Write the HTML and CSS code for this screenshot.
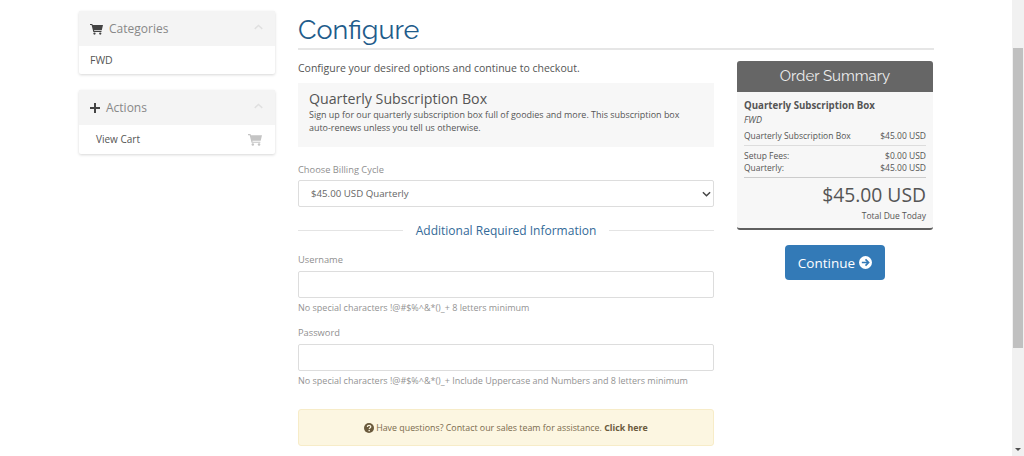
FILE: index.html
```html
<!DOCTYPE html>
<html lang="en">
<head>
  <meta charset="UTF-8">
  <title>Configure</title>
  <link rel="stylesheet" href="styles.css">
</head>
<body>
<div class="viewport">
  <div class="page">

    <!-- SIDEBAR -->
    <aside class="sidebar">
      <div class="panel">
        <div class="panel-head">
          <span class="panel-title">
            <svg class="icon-cart" viewBox="0 0 18 16"><path d="M0 1h3.2l.5 1.6H18l-1.7 7H5.6l.3 1.2h10v1.5H4.6L2.2 2.5H0z"/><circle cx="6.2" cy="14.3" r="1.6"/><circle cx="14.2" cy="14.3" r="1.6"/></svg>
            Categories
          </span>
          <svg class="chevron" viewBox="0 0 12 7"><path d="M1 6l5-4.5L11 6"/></svg>
        </div>
        <div class="panel-item">FWD</div>
      </div>
      <div class="panel">
        <div class="panel-head">
          <span class="panel-title">
            <svg class="icon-plus" viewBox="0 0 10 10"><path d="M4 0h2v4h4v2H6v4H4V6H0V4h4z"/></svg>
            Actions
          </span>
          <svg class="chevron" viewBox="0 0 12 7"><path d="M1 6l5-4.5L11 6"/></svg>
        </div>
        <div class="panel-item panel-link">
          View Cart
          <svg class="icon-cart-light" viewBox="0 0 18 16"><path d="M0 1h3.2l.5 1.6H18l-1.7 7H5.6l.3 1.2h10v1.5H4.6L2.2 2.5H0z"/><circle cx="6.2" cy="14.3" r="1.6"/><circle cx="14.2" cy="14.3" r="1.6"/></svg>
        </div>
      </div>
    </aside>

    <!-- MAIN -->
    <main class="main">
      <h1 class="page-title">Configure</h1>

      <div class="columns">
        <div class="config">
          <p class="intro">Configure your desired options and continue to checkout.</p>

          <div class="product-box">
            <div class="product-name">Quarterly Subscription Box</div>
            <p class="product-desc">Sign up for our quarterly subscription box full of goodies and more. This subscription box auto-renews unless you tell us otherwise.</p>
          </div>

          <div class="field field-billing">
            <label class="field-label">Choose Billing Cycle</label>
            <div class="select-box">
              $45.00 USD Quarterly
              <svg class="select-arrow" viewBox="0 0 10 6"><path d="M1 1l4 4 4-4"/></svg>
            </div>
          </div>

          <div class="sub-heading"><span>Additional Required Information</span></div>

          <div class="field field-user">
            <label class="field-label">Username</label>
            <div class="text-input"></div>
            <div class="help">No special characters !@#$%^&amp;*()_+ 8 letters minimum</div>
          </div>

          <div class="field field-pass">
            <label class="field-label">Password</label>
            <div class="text-input"></div>
            <div class="help">No special characters !@#$%^&amp;*()_+ Include Uppercase and Numbers and 8 letters minimum</div>
          </div>

          <div class="notice">
            <svg class="icon-question" viewBox="0 0 16 16"><circle cx="8" cy="8" r="8"/><path class="q-mark" d="M5.4 6.2c0-3.3 5.4-3.3 5.4-.2 0 2-2.4 2-2.4 3.6"/><rect class="q-dot" x="7.2" y="11" width="2.2" height="2.2"/></svg>
            <span>Have questions? Contact our sales team for assistance. <strong>Click here</strong></span>
          </div>
        </div>

        <!-- ORDER SUMMARY -->
        <div class="summary-col">
          <div class="summary">
            <div class="summary-head">Order Summary</div>
            <div class="summary-body">
              <div class="summary-name">Quarterly Subscription Box</div>
              <div class="summary-group">FWD</div>
              <div class="summary-row summary-row-first"><span>Quarterly Subscription Box</span><span>$45.00 USD</span></div>
              <div class="summary-fees">
                <div class="summary-row"><span>Setup Fees:</span><span>$0.00 USD</span></div>
                <div class="summary-row"><span>Quarterly:</span><span>$45.00 USD</span></div>
              </div>
              <div class="summary-total">$45.00 USD</div>
              <div class="summary-due">Total Due Today</div>
            </div>
          </div>
          <div class="btn-continue">
            Continue
            <svg class="icon-arrow" viewBox="0 0 16 16"><circle cx="8" cy="8" r="8"/><path class="arrow-mark" d="M3.5 8h8M8 4.2L11.8 8 8 11.8"/></svg>
          </div>
        </div>
      </div>
    </main>

    <!-- SCROLLBAR (headless browser hides the native one) -->
    <div class="scrollbar">
      <div class="scroll-thumb"></div>
      <div class="scroll-down"></div>
    </div>
  </div>
</div>
</body>
</html>
```

FILE: styles.css
```css
/* --- Global --- */
html, body { margin: 0; padding: 0; height: 100%; overflow: hidden; }
body { font-family: 'Open Sans', sans-serif; font-size: 10px; color: #555; background: #fff; }
.viewport { height: 456px; overflow: hidden; }
.page { display: flex; align-items: flex-start; height: 456px; padding: 11px 0 0 79px; box-sizing: border-box; gap: 23px; }

/* --- Scrollbar --- */
.scrollbar { width: 12px; height: 456px; margin: -11px 0 0 55px; flex: none; background: #f1f1f1; display: flex; flex-direction: column; align-items: center; }
.scroll-thumb { width: 10px; height: 300px; margin-top: 48px; background: #c0c0c0; }
.scroll-down { margin-top: auto; margin-bottom: 5px; border: 3px solid transparent; border-top: 3px solid #505050; border-bottom: 0; }

/* --- Sidebar --- */
.sidebar { width: 196px; flex: none; display: flex; flex-direction: column; gap: 16px; }
.panel { background: #fff; border-radius: 2px; box-shadow: 0 1px 3px rgba(0,0,0,0.16); }
.panel-head { height: 35px; background: #f4f4f4; display: flex; align-items: center; justify-content: space-between; padding: 0 12px 0 11px; }
.panel-title { font-size: 12px; color: #888; display: flex; align-items: center; gap: 6px; }
.panel-item { height: 28px; display: flex; align-items: center; padding: 0 11px; font-size: 10.5px; color: #555; }
.panel-link { height: 29px; box-sizing: border-box; justify-content: space-between; padding: 0 13px 1px 17px; font-size: 10px; }
.icon-cart { width: 13px; height: 12px; fill: #444; }
.icon-plus { width: 10px; height: 10px; fill: #444; }
.icon-cart-light { width: 14px; height: 13px; fill: #c4c4c4; }
.chevron { width: 9px; height: 6px; fill: none; stroke: #e0e0e0; stroke-width: 2; margin-top: -3px; }

/* --- Main --- */
.main { width: 636px; flex: none; }
.page-title { margin: 0; height: 39px; box-sizing: border-box; font-family: 'Raleway', 'Inter', sans-serif; font-weight: 400; font-size: 27px; line-height: 37px; color: #1f5c8b; border-bottom: 2px solid #e6e6e6; }
.intro { margin: 0; font-size: 10.5px; line-height: 14px; color: #555; }
.columns { display: flex; align-items: flex-start; gap: 23px; }
.config { width: 416px; flex: none; margin-top: 11px; }

.product-box { height: 64px; margin-top: 8px; box-sizing: border-box; background: #f7f7f7; padding: 7px 11px 0; }
.product-name { font-size: 14.2px; line-height: 17px; color: #555; }
.product-desc { margin: 1px 0 0; font-size: 8.93px; line-height: 13px; color: #555; }

.field-label { display: block; font-size: 9.3px; line-height: 14px; color: #8f8f8f; }
.field-billing { margin-top: 16px; }
.select-box { height: 27px; box-sizing: border-box; margin-top: 3px; border: 1px solid #ddd; border-radius: 2px; display: flex; align-items: center; justify-content: space-between; padding: 0 2px 0 12px; font-size: 9.7px; color: #666; }
.select-arrow { width: 9px; height: 6px; fill: none; stroke: #444; stroke-width: 1.6; }

.sub-heading { display: flex; align-items: center; gap: 13px; margin-top: 14px; font-size: 12px; line-height: 19px; color: #336a98; }
.sub-heading::before, .sub-heading::after { content: ""; flex: 1; height: 1px; background: #e4e4e4; }

.field-user { margin-top: 13px; }
.field-pass { margin-top: 11px; }
.text-input { height: 27px; box-sizing: border-box; margin-top: 4px; border: 1px solid #ddd; border-radius: 2px; }
.help { margin-top: 3px; font-size: 9px; line-height: 14px; color: #939393; }

.notice { height: 37px; box-sizing: border-box; margin-top: 21px; background: #fcf6e1; border: 1px solid #f7ecc8; border-radius: 3px; display: flex; align-items: center; justify-content: center; gap: 2px; font-size: 8.85px; color: #7a6a4c; }
.notice strong { color: #6a5a3c; }
.icon-question { width: 10px; height: 10px; fill: #6a5a3c; }
.q-mark { fill: none; stroke: #fcf6e1; stroke-width: 2; }
.q-dot { fill: #fcf6e1; }

/* --- Order Summary --- */
.summary-col { width: 197px; flex: none; margin-top: 11px; }
.summary { width: 196px; border-radius: 3px; background: #f7f7f7; border-bottom: 2px solid #5f5f5f; }
.summary-head { height: 31px; background: #666; border-radius: 3px 3px 0 0; color: #eee; font-family: 'Raleway', 'Inter', sans-serif; font-size: 15px; line-height: 31px; text-align: center; }
.summary-body { padding: 7px 7px 5px; font-size: 8.5px; color: #555; }
.summary-name { font-size: 9.7px; font-weight: 700; line-height: 14px; }
.summary-group { font-style: italic; font-size: 9px; line-height: 12px; margin-top: 1px; }
.summary-row { display: flex; justify-content: space-between; line-height: 12px; }
.summary-row-first { margin-top: 4px; padding-bottom: 3px; border-bottom: 1px solid #ddd; }
.summary-fees { padding: 4px 0 3px; border-bottom: 1px solid #ccc; }
.summary-total { font-size: 19.3px; line-height: 26px; text-align: right; margin-top: 4px; }
.summary-due { font-size: 8.5px; line-height: 14px; margin-top: 1px; text-align: right; }

.btn-continue { width: 100px; height: 35px; margin: 15px 0 0 48px; background: #337ab7; border-radius: 4px; color: #fff; font-size: 13.5px; display: flex; align-items: center; justify-content: center; gap: 4px; }
.icon-arrow { width: 13px; height: 13px; fill: #fff; }
.arrow-mark { fill: none; stroke: #337ab7; stroke-width: 2; }
```
